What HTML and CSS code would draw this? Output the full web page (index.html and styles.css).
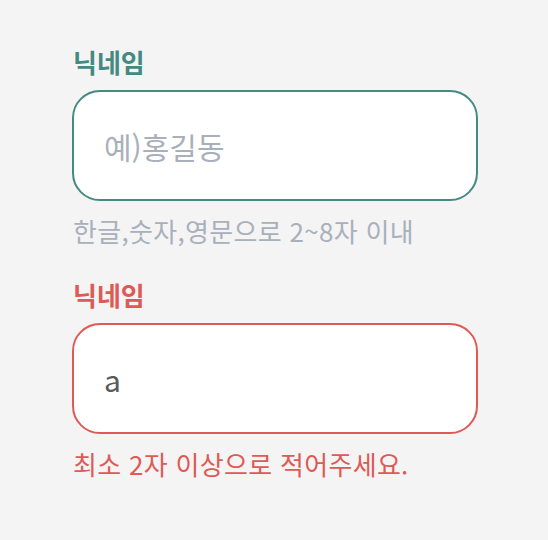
FILE: index.html
```html
<!DOCTYPE html>
<html lang="ko">
<head>
  <meta charset="UTF-8" />
  <meta name="viewport" content="width=device-width, initial-scale=1.0"/>
  <title>닉네임 입력</title>
  <link rel="stylesheet" href="styles.css">
</head>
<body>

  <div class="form">
    <!-- 기본 상태 -->
    <div class="field">
      <label class="field-label" for="nick-1">닉네임</label>
      <input type="text" id="nick-1" class="field-input focus" placeholder="예)홍길동">
      <p class="field-help">한글,숫자,영문으로 2~8자 이내</p>
    </div>

    <!-- 에러 상태 -->
    <div class="field error">
      <label class="field-label" for="nick-2">닉네임</label>
      <input type="text" id="nick-2" class="field-input" value="a">
      <p class="field-help">최소 2자 이상으로 적어주세요.</p>
    </div>
  </div>

</body>
</html>
```

FILE: styles.css
```css
body {
  margin: 0;
  font-family: 'Noto Sans CJK KR', 'Noto Sans', sans-serif;
  background: #f4f4f4;
  color: #333;
}

.form {
  display: flex;
  flex-direction: column;
  gap: 32px;
  padding: 46px 70px 0 72px;
}

.field {
  display: flex;
  flex-direction: column;
}

.field-label {
  font-size: 26px;
  font-weight: 700;
  color: #458a82;
  line-height: 32px;
  margin-bottom: 12px;
  padding-left: 1px;
}

.field-input {
  height: 111px;
  box-sizing: border-box;
  border: 2px solid #458a82;
  border-radius: 28px;
  background: #fff;
  padding: 0 30px;
  font-family: inherit;
  font-size: 30px;
  font-weight: 400;
  color: #5a5a5a;
  outline: none;
}

.field-input::placeholder {
  color: #a9b0bc;
}

.field-help {
  margin: 14px 0 0;
  font-size: 26px;
  font-weight: 400;
  letter-spacing: 0.3px;
  line-height: 32px;
  color: #a9b0bc;
  padding-left: 1px;
}

/* error */
.field.error .field-label,
.field.error .field-help {
  color: #df5a55;
}

.field.error .field-input {
  border-color: #df5a55;
}
```
